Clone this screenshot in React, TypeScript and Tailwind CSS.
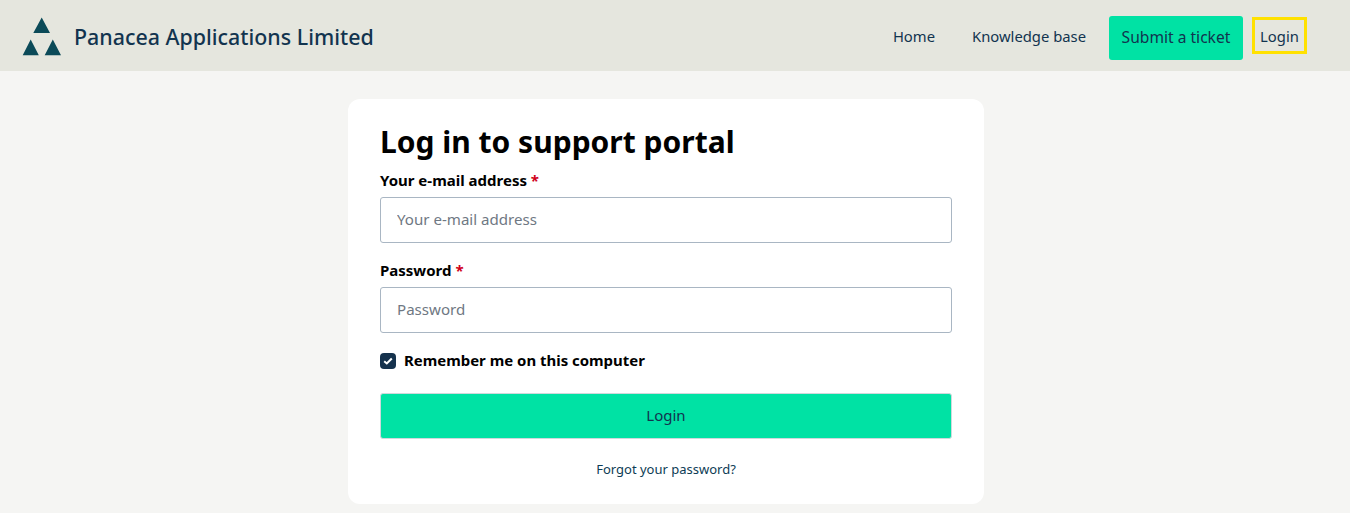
export default function App() {
  const font = { fontFamily: '"Noto Sans", sans-serif' };
  return (
    <div style={font} className="min-h-[513px] h-[513px] overflow-hidden bg-[#f5f5f3] text-[#0d3349]">
      <header className="h-[71px] bg-[#e5e6de] flex items-center pl-[22px] pr-[43px]">
        <svg width="40" height="40" viewBox="22 16 40 40" className="shrink-0 mt-[1px]">
          <path d="M41.700 17.500 L50 33 L33.300 33 Z M30.700 39.500 L38.800 55.200 L22.700 55.200 Z M52.800 39.500 L61 55.200 L44.700 55.200 Z" fill="#0b4a58" />
        </svg>
        <div className="ml-3 mt-[2px] text-[21.400px] leading-none font-medium text-[#12344f] whitespace-nowrap">Panacea Applications Limited</div>
        <nav className="ml-auto flex items-center text-[14.800px] text-[#12344f]">
          <a className="mr-[37px] pt-[2px]">Home</a>
          <a className="mr-[23px] pt-[2px]">Knowledge base</a>
          <a className="h-[44px] w-[134px] mt-[5px] flex items-center justify-center rounded-[3px] bg-[#00e2a4] text-[15.600px] mr-[9px]">Submit a ticket</a>
          <a className="h-[37px] w-[55px] pt-[1px] flex items-center justify-center border-[3px] border-[#ffe100]">Login</a>
        </nav>
      </header>
      <main className="flex justify-center pt-[28px] pr-[18px]">
        <section className="w-[636px] h-[405px] bg-white rounded-[12px] px-8 flex flex-col">
          <h1 className="text-[30px] leading-none font-bold text-black mt-[28px] whitespace-nowrap">Log in to support portal</h1>
          <label className="mt-[13px] text-[15px] leading-[20px] font-bold text-black">Your e-mail address <span className="text-[#d0021b]">*</span></label>
          <input placeholder="Your e-mail address" className="mt-[7px] h-[46px] border border-[#a9b6c3] rounded-[3px] px-4 pb-[2px] text-[15.100px] placeholder:text-[#6f7883] outline-none" />
          <label className="mt-[17px] text-[15px] leading-[20px] font-bold text-black">Password <span className="text-[#d0021b]">*</span></label>
          <input placeholder="Password" className="mt-[7px] h-[46px] border border-[#a9b6c3] rounded-[3px] px-4 pb-[2px] text-[15.100px] placeholder:text-[#6f7883] outline-none" />
          <div className="mt-[20px] flex items-center gap-2 h-4">
            <span className="w-4 h-4 rounded-[4px] bg-[#15324d] flex items-center justify-center">
              <svg width="10" height="8" viewBox="0 0 10 8" fill="none"><path d="M1.200 4.200 L3.800 6.500 L8.800 1.500" stroke="white" strokeWidth="2" /></svg>
            </span>
            <span className="text-[14.950px] font-bold text-black mt-[-2px]">Remember me on this computer</span>
          </div>
          <button className="mt-[24px] h-[46px] bg-[#00e2a4] border border-[#cfd8dc] rounded-[3px] pb-[2px] text-[15px] text-[#12344f]">Login</button>
          <a className="mt-[20px] text-center text-[13px] leading-[20px] text-[#0d3c55]">Forgot your password?</a>
        </section>
      </main>
    </div>
  );
}
